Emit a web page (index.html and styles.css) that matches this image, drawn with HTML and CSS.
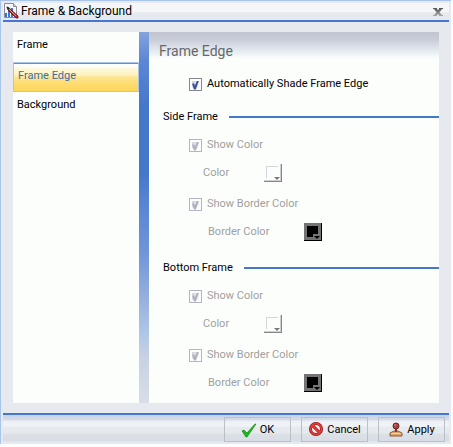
FILE: index.html
```html
<!DOCTYPE html>
<html lang="en">
<head>
  <meta charset="UTF-8">
  <title>Frame &amp; Background</title>
  <link rel="stylesheet" href="styles.css">
</head>
<body>
  <div class="dialog">
    <header class="titlebar">
      <svg class="app-icon" width="16" height="16" viewBox="0 0 16 16">
        <path d="M1.5 .5h9l3 3v11h-12z" fill="#f4f6fa" stroke="#8b8d96"/>
        <path d="M10.500 .5v3h3" fill="#d5d9e2" stroke="#8b8d96"/>
        <path d="M2 10h2v4H2zM5 7h2v7H5zM8 5h2v9H8z" fill="#3f74cc"/>
        <path d="M4 4l2 1 9 8v2h-2L5 7z" fill="#d22424" stroke="#4a1515" stroke-width=".8"/>
        <path d="M6 6l7 7" stroke="#ff9a8c" stroke-width=".8"/>
        <path d="M3.500 3.500l3 1.500-1.500 1.500z" fill="#222"/>
      </svg>
      <h1>Frame &amp; Background</h1>
      <button class="close" aria-label="Close">
        <svg width="10" height="9" viewBox="0 0 10 9">
          <defs>
            <linearGradient id="gray" x2="0" y2="1">
              <stop offset="0" stop-color="#555"/>
              <stop offset="1" stop-color="#aaa"/>
            </linearGradient>
          </defs>
          <path d="M0 0h4v1l1 1 1-1V0h4v1H9L6.500 4.500 9 7h1v1H6V7L5 6 4 7v1H0V7h1l2.500-2.500L1 1H0z" fill="url(#gray)"/>
        </svg>
      </button>
    </header>

    <div class="content">
      <nav class="sidebar">
        <a href="#">Frame</a>
        <a href="#" class="active">Frame Edge</a>
        <a href="#">Background</a>
      </nav>
      <div class="divider"></div>
      <main class="panel">
        <h2>Frame Edge</h2>
        <label class="check"><input type="checkbox" checked>Automatically Shade Frame Edge</label>

        <section>
          <h3>Side Frame</h3>
          <label class="check disabled"><input type="checkbox" checked disabled>Show Color</label>
          <div class="field">
            <label for="side-color">Color</label>
            <button id="side-color" class="swatch" disabled></button>
          </div>
          <label class="check disabled second"><input type="checkbox" checked disabled>Show Border Color</label>
          <div class="field border-field">
            <label for="side-border">Border Color</label>
            <button id="side-border" class="swatch black" disabled></button>
          </div>
        </section>

        <section>
          <h3>Bottom Frame</h3>
          <label class="check disabled"><input type="checkbox" checked disabled>Show Color</label>
          <div class="field">
            <label for="bottom-color">Color</label>
            <button id="bottom-color" class="swatch" disabled></button>
          </div>
          <label class="check disabled second"><input type="checkbox" checked disabled>Show Border Color</label>
          <div class="field border-field">
            <label for="bottom-border">Border Color</label>
            <button id="bottom-border" class="swatch black" disabled></button>
          </div>
        </section>
      </main>
    </div>

    <footer class="buttons">
      <button>
        <svg width="16" height="16" viewBox="0 0 16 16">
          <path d="M1 9l2-1 3 3L14 2h1L6 15H5z" fill="#10c010" stroke="#087a08" stroke-width=".6"/>
        </svg>
        OK
      </button>
      <button>
        <svg width="16" height="16" viewBox="0 0 16 16">
          <circle cx="8" cy="7" r="5.500" fill="#f3e9ea" stroke="#8f1010" stroke-width="3"/>
          <path d="M4 3l8 8" stroke="#8f1010" stroke-width="3"/>
          <circle cx="8" cy="7" r="5.500" fill="none" stroke="#dc3c3c" stroke-width="2"/>
          <path d="M4 3l8 8" stroke="#dc3c3c" stroke-width="2"/>
        </svg>
        Cancel
      </button>
      <button>
        <svg width="16" height="16" viewBox="0 0 16 16">
          <path d="M2 14v-3l4-2h4l4 2v3z" fill="#dca36c" stroke="#8d5a32"/>
          <path d="M3 11.500h10" stroke="#f6cf9f"/>
          <path d="M7 6h2v4H7z" fill="#8a3030"/>
          <circle cx="8" cy="4" r="3" fill="#a84646" stroke="#682020"/>
          <path d="M6.500 3.500l1.500-1" stroke="#e6a0a0"/>
        </svg>
        Apply
      </button>
    </footer>
  </div>
</body>
</html>
```
FILE: styles.css
```css
* {
  box-sizing: border-box;
}
body {
  margin: 0;
  background: #fcfefc;
  color: #000;
  font: 11px/16px Roboto, sans-serif;
}
h1, h2, h3 {
  margin: 0;
  font-weight: normal;
}
button {
  font: inherit;
  color: inherit;
}
.dialog {
  margin: 0 2px 2px 0;
  padding: 0 2px;
  background: #e6e9ed;
  border-top: 1px solid #a9c5e9;
  border-left: 1px solid #a9c5e9;
}

/* title bar */
.titlebar {
  display: flex;
  align-items: center;
  height: 21px;
  padding-right: 6px;
  border-bottom: 2px solid #4577cc;
  background: linear-gradient(#e6e9ed 2px, #f4f6f8 2px, #f4f6f8 11px, #eceff2 11px, #e6e9ed 13px);
}
.titlebar h1 {
  flex: 1;
  margin-left: 2px;
  font-size: 12px;
}
.close {
  display: flex;
  padding: 4px 0 0;
  border: 0;
  background: none;
}

/* pages */
.content {
  display: flex;
  padding: 10px;
}
.sidebar {
  width: 126px;
  background: #fcfefc;
}
.sidebar a {
  display: block;
  height: 30px;
  padding: 0 4px;
  line-height: 26px;
  color: inherit;
  text-decoration: none;
}
.sidebar .active {
  border: 1px solid #a9c5e9;
  box-shadow: inset 0 1px #848a94;
  background: linear-gradient(#fcfefc 4px, #fdf9df 5px, #fdf2bd 12px, #fde594 14px, #fddd72 20px, #fdd85c 28px);
  color: #3e6ba5;
}
.divider {
  width: 10px;
  background: linear-gradient(#84a3dc, #5b86d4 8%, #4577cc 20%, #4577cc 38%, #5583d3 45%, #7196d8 60%, #97b1df 72%, #b0c8e8 82%, #c8d2e4 88%, #d9dde7);
}
.panel {
  flex: 1;
  padding: 0 0 6px;
  background: linear-gradient(#bfc4d0, #c8cdd8 8px, #d8dbe5 13px, #e6eef2 20px, #fcfefc 27px);
}
.panel h2 {
  height: 38px;
  padding-left: 10px;
  color: #686868;
  font-size: 14px;
  line-height: 38px;
}
.panel section {
  margin-top: 8px;
}
.check + section {
  margin-top: 5px;
}
.panel h3 {
  display: flex;
  align-items: center;
  gap: 11px;
  height: 28px;
  padding-left: 14px;
  font-size: 11px;
}
.panel h3::after {
  content: "";
  flex: 1;
  height: 2px;
  background: #4577cc;
}
.check {
  display: flex;
  align-items: center;
  gap: 5px;
  height: 28px;
  padding-left: 40px;
}
.second {
  margin-top: 3px;
}
.disabled, .field {
  color: #a09e9e;
}
.check input {
  appearance: none;
  display: flex;
  width: 13px;
  height: 13px;
  margin: 0;
  padding: 2px;
  border: 1px solid #85878c;
  background: linear-gradient(135deg, #cdd2dc, #fff) content-box, #fcfefc;
}
.check input::before {
  content: "";
  width: 9px;
  height: 9px;
  background: #3c549c;
  clip-path: polygon(0 35%, 30% 30%, 42% 55%, 72% 0, 100% 0, 55% 100%, 28% 100%);
}
.check input:disabled {
  border-color: #b4b4c8;
}
.check input:disabled::before {
  background: #b0b0bc;
}
.field {
  display: flex;
  align-items: center;
  height: 28px;
  padding-left: 54px;
}
.field label {
  width: 61px;
}
.border-field {
  padding-left: 59px;
}
.border-field label {
  width: 96px;
}

/* color picker button with a small arrow in the corner */
.swatch {
  display: flex;
  align-items: flex-end;
  justify-content: flex-end;
  width: 18px;
  height: 18px;
  padding: 0 1px 1px 0;
  border: 0;
  background: linear-gradient(#d4d4dc, #d4d4dc) 2px 2px / 12px 1px no-repeat,
    linear-gradient(#d4d4dc, #d4d4dc) 2px 2px / 1px 12px no-repeat,
    #fcfefc;
  box-shadow: inset -1px -1px #85858a, inset -2px -2px #d0d0d4;
}
.swatch::after {
  content: "";
  border: 3px solid transparent;
  border-top-color: #777;
  border-bottom: 0;
  margin: 0 1px 1px 0;
}
.swatch.black {
  background: linear-gradient(#747474, #747474) 9px 11px / 8px 6px no-repeat,
    linear-gradient(#000, #000) 3px 3px / 11px 11px no-repeat,
    #747474;
  box-shadow: inset -1px -1px #000;
}
.swatch.black::after {
  border-top-color: #000;
}

/* bottom buttons */
.buttons {
  display: flex;
  justify-content: flex-end;
  gap: 10px;
  height: 31px;
  padding: 2px 4px;
  border-top: 2px solid #4577cc;
  background: linear-gradient(#c6d2e8, #d6dbe6 5px, #ecf0f4 6px, #f1f4f7 11px, #e6e9ed 12px, #e6e9ed 18px, #dce1e5 19px, #d8dce6 26px, #e6e9ed 27px);
}
.buttons button {
  display: flex;
  align-items: center;
  justify-content: center;
  gap: 3px;
  width: 67px;
  height: 25px;
  padding: 0;
  border: 1px solid #b9c0ca;
  background: none;
}
```
